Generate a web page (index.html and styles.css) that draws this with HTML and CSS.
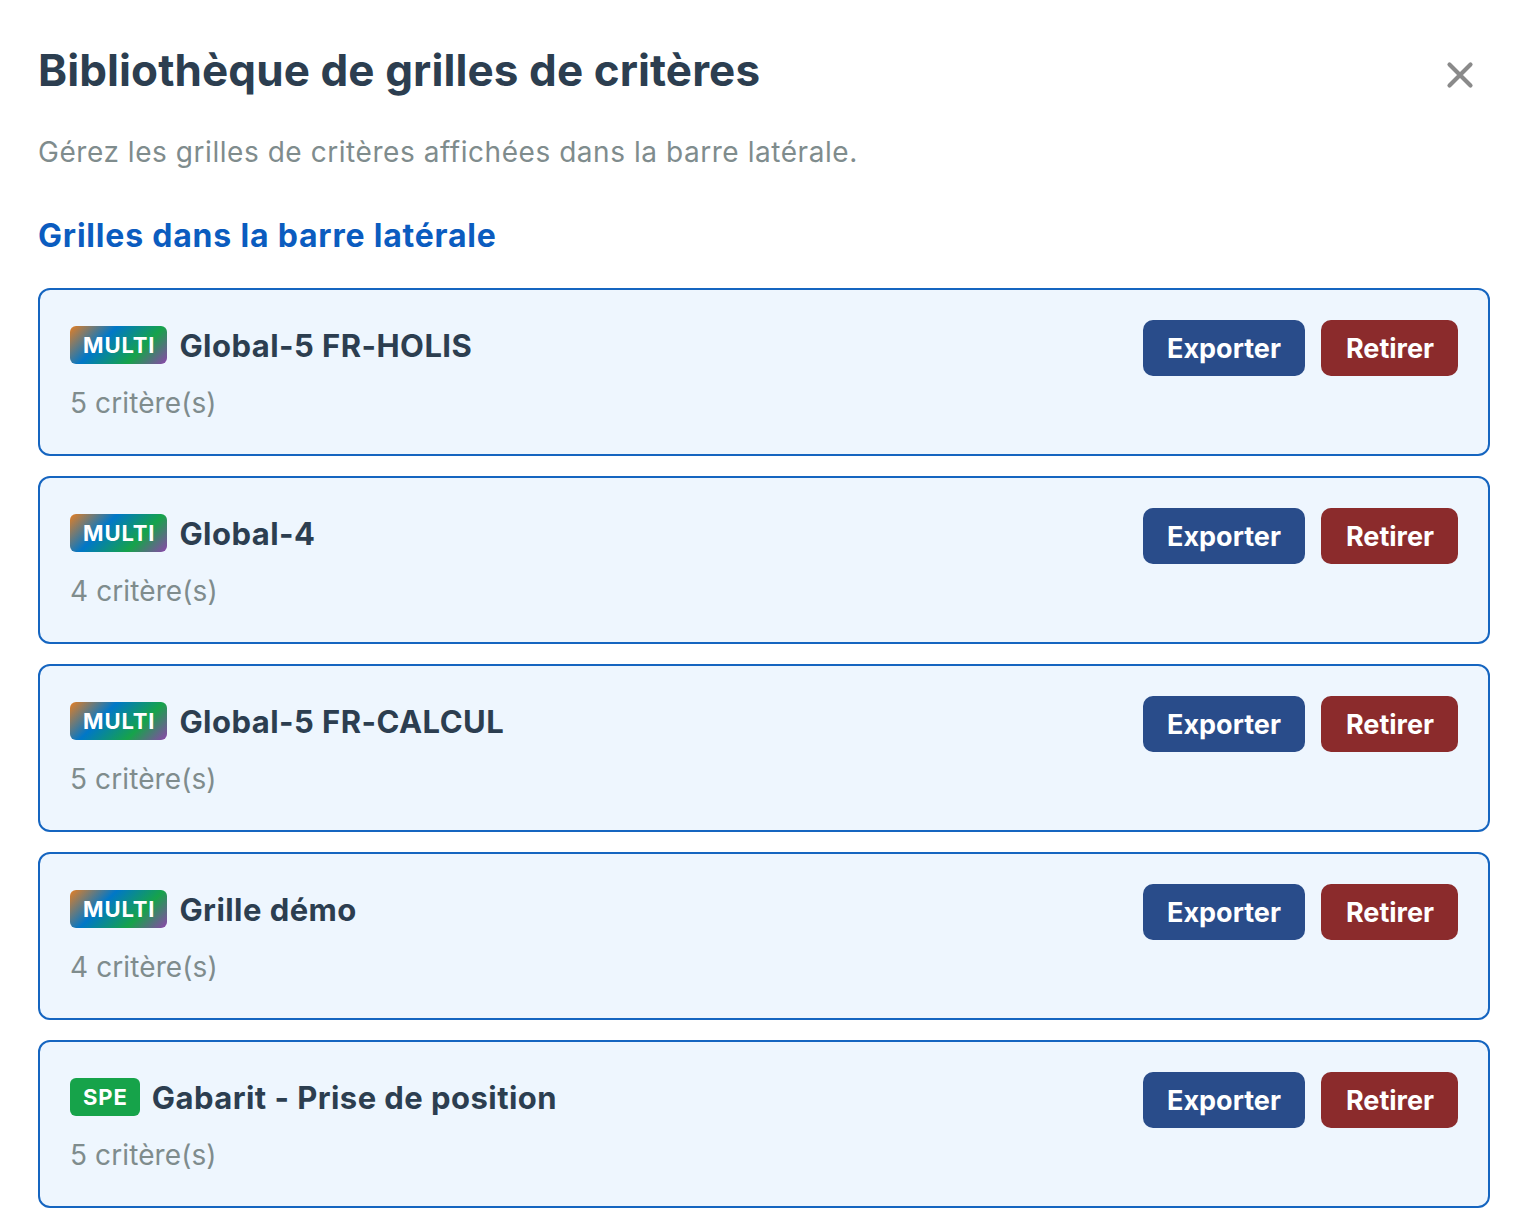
FILE: index.html
```html
<!DOCTYPE html>
<html lang="fr">
<head>
<meta charset="utf-8">
<title>Bibliothèque de grilles de critères</title>
<link rel="stylesheet" href="styles.css">
</head>
<body>
<div class="dialog">
  <div class="header">
    <h1 class="title">Bibliothèque de grilles de critères</h1>
    <button class="close" aria-label="Fermer">
      <svg width="28" height="28" viewBox="0 0 28 28"><path d="M3.5 3.5 L24.5 24.5 M24.5 3.5 L3.5 24.5" stroke="#8a8a8a" stroke-width="4.2" stroke-linecap="round" fill="none"/></svg>
    </button>
  </div>
  <p class="subtitle">Gérez les grilles de critères affichées dans la barre latérale.</p>
  <h2 class="section">Grilles dans la barre latérale</h2>
  <div class="list">
    <div class="card">
      <div class="info">
        <div class="name-row"><span class="badge multi">MULTI</span><span class="name">Global-5 FR-HOLIS</span></div>
        <div class="count">5 critère(s)</div>
      </div>
      <div class="actions"><button class="btn export">Exporter</button><button class="btn remove">Retirer</button></div>
    </div>
    <div class="card">
      <div class="info">
        <div class="name-row"><span class="badge multi">MULTI</span><span class="name">Global-4</span></div>
        <div class="count">4 critère(s)</div>
      </div>
      <div class="actions"><button class="btn export">Exporter</button><button class="btn remove">Retirer</button></div>
    </div>
    <div class="card">
      <div class="info">
        <div class="name-row"><span class="badge multi">MULTI</span><span class="name">Global-5 FR-CALCUL</span></div>
        <div class="count">5 critère(s)</div>
      </div>
      <div class="actions"><button class="btn export">Exporter</button><button class="btn remove">Retirer</button></div>
    </div>
    <div class="card">
      <div class="info">
        <div class="name-row"><span class="badge multi">MULTI</span><span class="name">Grille démo</span></div>
        <div class="count">4 critère(s)</div>
      </div>
      <div class="actions"><button class="btn export">Exporter</button><button class="btn remove">Retirer</button></div>
    </div>
    <div class="card">
      <div class="info">
        <div class="name-row"><span class="badge spe">SPE</span><span class="name">Gabarit - Prise de position</span></div>
        <div class="count">5 critère(s)</div>
      </div>
      <div class="actions"><button class="btn export">Exporter</button><button class="btn remove">Retirer</button></div>
    </div>
  </div>
</div>
</body>
</html>
```
FILE: styles.css
```css
* { box-sizing: border-box; }
html, body { margin: 0; padding: 0; background: #ffffff; }
body { font-family: Inter, "Noto Sans", sans-serif; color: #2c3e50; }
.dialog { padding: 44px 38px 0 38px; }
.header { display: flex; justify-content: space-between; align-items: center; }
.title { margin: 0; font-size: 44px; line-height: 53px; font-weight: 700; color: #2c3e50; letter-spacing: 0.1px; }
.close { border: 0; background: transparent; padding: 0; margin: 8px 16px 0 0; width: 28px; height: 28px; display: flex; cursor: pointer; }
.subtitle { margin: 34px 0 0 0; font-size: 28px; line-height: 42px; color: #7f8c8d; letter-spacing: 0.55px; }
.section { margin: 42px 0 0 0; font-size: 32px; line-height: 42px; font-weight: 700; color: #0b5cbf; letter-spacing: 0.8px; }
.list { display: flex; flex-direction: column; gap: 20px; margin-top: 31px; }
.card { border: 2px solid #1565c0; border-radius: 12px; background: #eef6fe; padding: 30px; display: flex; justify-content: space-between; align-items: flex-start; }
.info { display: flex; flex-direction: column; }
.name-row { display: flex; align-items: center; gap: 12px; height: 50px; }
.badge { color: #fff; font-size: 22px; font-weight: 700; line-height: 38px; height: 38px; padding: 0 12px 0 13px; border-radius: 6px; letter-spacing: 0.9px; }
.badge.multi { background: linear-gradient(135deg, #e67e22 0%, #0077c8 35%, #16a34a 70%, #8e44ad 100%); }
.badge.spe { background: #16a34a; }
.name { font-size: 31px; font-weight: 700; color: #2c3e50; letter-spacing: 0.45px; }
.count { margin-top: 12px; font-size: 28px; line-height: 42px; color: #7f8c8d; letter-spacing: 0.1px; }
.actions { display: flex; gap: 16px; }
.btn { border: 0; border-radius: 10px; height: 56px; padding: 0 24px; font-family: Inter, "Noto Sans", sans-serif; font-size: 27px; font-weight: 700; color: #fff; cursor: pointer; }
.btn.export { background: #294c8a; }
.btn.remove { background: #8b2b2c; padding: 0 24px 0 25px; }
```
